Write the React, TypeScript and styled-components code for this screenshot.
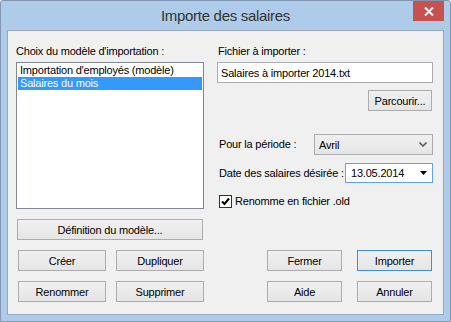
import React from 'react';
import styled, { createGlobalStyle, css } from 'styled-components';

const GlobalStyle = createGlobalStyle`
  html, body {
    margin: 0;
    padding: 0;
    background: #ffffff;
  }
  body {
    font-family: "Liberation Sans", Arial, sans-serif;
    font-size: 11px;
    letter-spacing: -0.2px;
    color: #000000;
  }
`;

/**
 * Window frame
 */
const Window = styled.div`
  box-sizing: border-box;
  width: 451px;
  height: 322px;
  display: flex;
  flex-direction: column;
  padding: 0 6px 6px 6px;
  background: #aecbe9;
  border: 1px solid #8196b0;
  border-radius: 3px 3px 0 0;
`;

const TitleBar = styled.div`
  height: 29px;
  display: grid;
  grid-template-columns: 1fr auto 1fr;
  align-items: start;
`;

const Title = styled.div`
  grid-column: 2;
  line-height: 29px;
  font-size: 15px;
  letter-spacing: -0.3px;
  color: #333333;
  white-space: nowrap;
`;

const CloseButton = styled.div`
  grid-column: 3;
  justify-self: end;
  width: 31px;
  height: 20px;
  display: flex;
  align-items: center;
  justify-content: center;
  background: #c75050;
`;

const Client = styled.div`
  flex: 1;
  display: flex;
  flex-direction: column;
  padding: 14px 10px 0 8px;
  background: #f0f0f0;
  border: 1px solid #97a9c0;
`;

const TopGrid = styled.div`
  display: grid;
  grid-template-columns: 188px 216px;
  column-gap: 13px;
`;

const Column = styled.div`
  display: flex;
  flex-direction: column;
`;

const Label = styled.div<{ $indent?: number; $width?: number }>`
  line-height: 13px;
  height: 13px;
  white-space: nowrap;
  padding-left: ${(p) => p.$indent ?? 0}px;
  ${(p) =>
    p.$width &&
    css`
      flex: 0 0 ${p.$width}px;
      box-sizing: border-box;
    `}
`;

const ListBox = styled.div`
  box-sizing: border-box;
  margin-top: 4px;
  height: 147px;
  padding: 1px;
  background: #ffffff;
  border: 1px solid #828790;
`;

const ListItem = styled.div<{ $selected?: boolean }>`
  height: 13px;
  line-height: 13px;
  padding-left: 2px;
  white-space: nowrap;
  background: ${(p) => (p.$selected ? '#3399ff' : 'transparent')};
  color: ${(p) => (p.$selected ? '#ffffff' : '#000000')};
`;

const Button = styled.div<{ $width?: number; $default?: boolean }>`
  box-sizing: border-box;
  width: ${(p) => (p.$width ? `${p.$width}px` : 'auto')};
  height: 21px;
  display: flex;
  align-items: center;
  justify-content: center;
  white-space: nowrap;
  background: linear-gradient(#f0f0f0, #e5e5e5);
  border: 1px solid ${(p) => (p.$default ? '#3c8fe4' : '#acacac')};
`;

const WideButton = styled(Button)`
  margin: 10px 1px 0 1px;
`;

const TextBox = styled.div`
  box-sizing: border-box;
  margin-top: 4px;
  height: 21px;
  display: flex;
  align-items: center;
  padding-left: 3px;
  background: #ffffff;
  border: 1px solid #abadb3;
`;

const BrowseButton = styled(Button)`
  align-self: flex-end;
  margin: 7px 1px 0 0;
`;

const FieldRow = styled.div<{ $top: number }>`
  display: flex;
  align-items: center;
  margin-top: ${(p) => p.$top}px;
`;

const Combo = styled.div`
  box-sizing: border-box;
  flex: 1;
  height: 21px;
  display: flex;
  align-items: center;
  justify-content: space-between;
  padding: 0 5px 0 4px;
  background: linear-gradient(#f0f0f0, #e5e5e5);
  border: 1px solid #acacac;
`;

const DatePicker = styled.div`
  box-sizing: border-box;
  width: 88px;
  height: 20px;
  margin-left: auto;
  display: flex;
  align-items: center;
  justify-content: space-between;
  padding: 0 5px 0 5px;
  background: #ffffff;
  border: 1px solid #5ea4ea;
`;

const CheckRow = styled.label`
  display: flex;
  align-items: center;
  gap: 3px;
  margin: 12px 0 0 2px;
  line-height: 13px;
`;

const CheckBox = styled.div`
  box-sizing: border-box;
  width: 13px;
  height: 13px;
  display: flex;
  align-items: center;
  justify-content: center;
  background: #ffffff;
  border: 1px solid #333333;
`;

const ButtonBar = styled.div`
  display: flex;
  flex-direction: column;
  gap: 10px;
  margin: 10px 1px 0 2px;
`;

const ButtonRow = styled.div`
  display: flex;
  justify-content: space-between;
`;

const ButtonGroup = styled.div<{ $gap: number }>`
  display: flex;
  gap: ${(p) => p.$gap}px;
`;

const CloseIcon = () => (
  <svg width="10" height="9" viewBox="0 0 10 9">
    <path d="M1 0.5 L9 8.5 M9 0.5 L1 8.5" stroke="#ffffff" strokeWidth="2" />
  </svg>
);

const Chevron = () => (
  <svg width="8" height="5" viewBox="0 0 8 5">
    <path d="M0.5 0.5 L4 4 L7.5 0.5" stroke="#606060" strokeWidth="1.6" fill="none" />
  </svg>
);

const DropTriangle = () => (
  <svg width="7" height="4" viewBox="0 0 7 4">
    <path d="M0 0 H7 L3.5 4 Z" fill="#000000" />
  </svg>
);

const CheckMark = () => (
  <svg width="9" height="9" viewBox="0 0 9 9">
    <path d="M1 4.5 L3.5 7 L8 1.5" stroke="#000000" strokeWidth="2" fill="none" />
  </svg>
);

export default function App() {
  return (
    <>
      <GlobalStyle />
      <Window>
        <TitleBar>
          <Title>Importe des salaires</Title>
          <CloseButton>
            <CloseIcon />
          </CloseButton>
        </TitleBar>
        <Client>
          <TopGrid>
            <Column>
              <Label>Choix du modèle d'importation :</Label>
              <ListBox>
                <ListItem>Importation d'employés (modèle)</ListItem>
                <ListItem $selected>Salaires du mois</ListItem>
              </ListBox>
              <WideButton>Définition du modèle...</WideButton>
            </Column>
            <Column>
              <Label $indent={1}>Fichier à importer :</Label>
              <TextBox>Salaires à importer 2014.txt</TextBox>
              <BrowseButton $width={64}>Parcourir...</BrowseButton>
              <FieldRow $top={23}>
                <Label $indent={2} $width={97}>
                  Pour la période :
                </Label>
                <Combo>
                  <span>Avril</span>
                  <Chevron />
                </Combo>
              </FieldRow>
              <FieldRow $top={8}>
                <Label $indent={2}>Date des salaires désirée :</Label>
                <DatePicker>
                  <span>13.05.2014</span>
                  <DropTriangle />
                </DatePicker>
              </FieldRow>
              <CheckRow>
                <CheckBox>
                  <CheckMark />
                </CheckBox>
                <span>Renomme en fichier .old</span>
              </CheckRow>
            </Column>
          </TopGrid>
          <ButtonBar>
            <ButtonRow>
              <ButtonGroup $gap={10}>
                <Button $width={88}>Créer</Button>
                <Button $width={88}>Dupliquer</Button>
              </ButtonGroup>
              <ButtonGroup $gap={15}>
                <Button $width={75}>Fermer</Button>
                <Button $width={75} $default>
                  Importer
                </Button>
              </ButtonGroup>
            </ButtonRow>
            <ButtonRow>
              <ButtonGroup $gap={10}>
                <Button $width={88}>Renommer</Button>
                <Button $width={88}>Supprimer</Button>
              </ButtonGroup>
              <ButtonGroup $gap={15}>
                <Button $width={75}>Aide</Button>
                <Button $width={75}>Annuler</Button>
              </ButtonGroup>
            </ButtonRow>
          </ButtonBar>
        </Client>
      </Window>
    </>
  );
}
